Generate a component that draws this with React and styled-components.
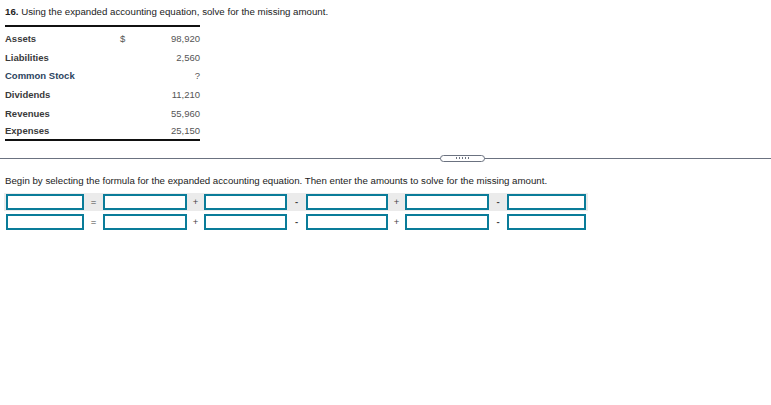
import React from 'react';
import styled, { createGlobalStyle } from 'styled-components';

const GlobalStyle = createGlobalStyle`
  body {
    margin: 0;
    background: #fff;
    font-family: "Liberation Sans", Arial, sans-serif;
    color: #222;
  }
`;

const Page = styled.div`
  width: 771px;
  height: 405px;
  padding-top: 6px;
  box-sizing: border-box;
`;

const Question = styled.div`
  font-size: 9.7px;
  padding-left: 5px;
  line-height: 11px;
  color: #222;
  b {
    font-weight: bold;
  }
`;

const DataTable = styled.div`
  width: 195px;
  margin: 8px 0 0 5px;
  border-top: 2px solid #111;
  border-bottom: 2px solid #111;
  padding-top: 2px;
`;

const Row = styled.div`
  display: grid;
  grid-template-columns: 115px 12px 1fr;
  height: 18.8px;
  align-items: center;
  font-size: 9.5px;
  &:last-child {
    height: 16px;
    align-items: start;
    padding-top: 2px;
    box-sizing: border-box;
  }
`;

const Label = styled.span`
  font-weight: bold;
  color: ${p => (p.$accent ? '#2c4460' : '#3a3a3a')};
`;

const Dollar = styled.span`
  color: #555;
`;

const Value = styled.span`
  text-align: right;
  color: #555;
`;

const Divider = styled.div`
  position: relative;
  margin-top: 17px;
  height: 1px;
  background: #6b7280;
`;

const Handle = styled.div`
  position: absolute;
  left: 440px;
  top: -3px;
  width: 45px;
  height: 7px;
  box-sizing: border-box;
  border: 1px solid #6b7280;
  border-radius: 4px;
  background: #fff;
  display: flex;
  justify-content: center;
  align-items: center;
  gap: 2px;
`;

const Dot = styled.span`
  width: 1px;
  height: 2px;
  background: #6b7280;
`;

const Instructions = styled.div`
  font-size: 9.7px;
  padding-left: 5px;
  margin-top: 16px;
  line-height: 11px;
  color: #222;
`;

const EquationTable = styled.div`
  margin: 7px 0 0 4px;
  display: flex;
  flex-direction: column;
  gap: 2px;
  width: 584px;
`;

const EquationRow = styled.div`
  display: grid;
  grid-template-columns: 78px 19px 84px 17px 83px 19px 82px 17px 84px 18px 79px;
  align-items: center;
  padding: 1px 2px;
  height: 16px;
  background: ${p => (p.$shaded ? '#ebebeb' : 'transparent')};
`;

const Field = styled.input`
  box-sizing: border-box;
  width: 100%;
  height: 16px;
  border: 2px solid #0a7c99;
  background: #fff;
  padding: 0 2px;
  font-size: 9px;
  outline: none;
`;

const Operator = styled.span`
  text-align: center;
  font-size: 9.5px;
  color: #444;
  font-weight: ${p => (p.$minus ? 'bold' : 'normal')};
`;

const items = [
  { label: 'Assets', dollar: '$', value: '98,920' },
  { label: 'Liabilities', value: '2,560' },
  { label: 'Common Stock', value: '?', accent: true },
  { label: 'Dividends', value: '11,210' },
  { label: 'Revenues', value: '55,960' },
  { label: 'Expenses', value: '25,150' },
];

const ops = ['=', '+', '-', '+', '-'];

function Equation({ shaded }) {
  const cells = [];
  cells.push(<Field key="f0" type="text" />);
  ops.forEach((op, i) => {
    cells.push(
      <Operator key={'o' + i} $minus={op === '-'}>
        {op}
      </Operator>
    );
    cells.push(<Field key={'f' + (i + 1)} type="text" />);
  });
  return <EquationRow $shaded={shaded}>{cells}</EquationRow>;
}

export default function App() {
  return (
    <Page>
      <GlobalStyle />
      <Question>
        <b>16.</b> Using the expanded accounting equation, solve for the missing amount.
      </Question>
      <DataTable>
        {items.map(it => (
          <Row key={it.label}>
            <Label $accent={it.accent}>{it.label}</Label>
            <Dollar>{it.dollar}</Dollar>
            <Value>{it.value}</Value>
          </Row>
        ))}
      </DataTable>
      <Divider>
        <Handle>
          {[0, 1, 2, 3, 4].map(i => (
            <Dot key={i} />
          ))}
        </Handle>
      </Divider>
      <Instructions>
        Begin by selecting the formula for the expanded accounting equation. Then enter the amounts to solve for the missing amount.
      </Instructions>
      <EquationTable>
        <Equation shaded />
        <Equation />
      </EquationTable>
    </Page>
  );
}
